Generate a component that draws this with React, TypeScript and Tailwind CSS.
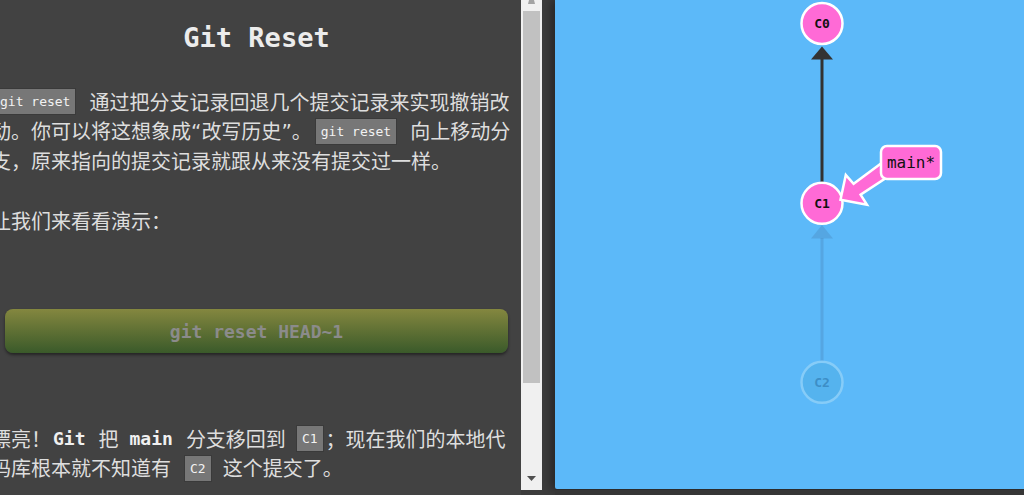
import React from 'react';

const CJK = "font-['Noto_Sans_CJK_SC','Noto_Sans',sans-serif]";
const MONO = "font-['DejaVu_Sans_Mono','Liberation_Mono',monospace]";

const Code: React.FC<{ children: React.ReactNode; className?: string }> = ({ children, className = '' }) => (
  <span
    className={`inline-block h-[27px] shrink-0 border border-[#3a3a3a] bg-[#777777] px-[5px] text-[13px] leading-[25px] text-[#f2f2f2] font-['DejaVu_Sans_Mono','Liberation_Mono',monospace] ${className}`}
  >
    {children}
  </span>
);

const Line: React.FC<{ children: React.ReactNode }> = ({ children }) => (
  <div className="flex h-[29.5px] items-center whitespace-nowrap">{children}</div>
);

const Bold: React.FC<{ children: React.ReactNode; className?: string }> = ({ children, className = '' }) => (
  <b
    className={`text-[18px] font-bold text-[#f0f0f0] font-['DejaVu_Sans_Mono','Liberation_Mono',monospace] ${className}`}
  >
    {children}
  </b>
);

const Lesson: React.FC = () => (
  <div className="w-[521px] shrink-0 overflow-hidden bg-[#424242]">
    <div className="flex w-[513px] flex-col pt-[20px]">
      <h1
        className={`text-center text-[27px] font-bold leading-[36px] text-[#ececec] ${MONO}`}
      >
        Git Reset
      </h1>
      <div className={`-ml-[9px] mt-[31px] text-[20px] text-[#dedede] ${CJK}`}>
        <Line>
          <Code className="ml-[3px] mr-[13px]">git reset</Code>
          通过把分支记录回退几个提交记录来实现撤销改
        </Line>
        <Line>
          动。你可以将这想象成<span className="font-['DejaVu_Sans',sans-serif]">“</span>改写历史
          <span className="font-['DejaVu_Sans',sans-serif]">”</span>。
          <Code className="ml-[3px] mr-[13px]">git reset</Code>
          向上移动分
        </Line>
        <Line>支，原来指向的提交记录就跟从来没有提交过一样。</Line>
      </div>
      <div className={`-ml-[9px] mt-[30.5px] text-[20px] text-[#dedede] ${CJK}`}>
        <Line>让我们来看看演示：</Line>
      </div>
      <div className="mx-[5px] mt-[73.5px] flex h-[44px] items-center justify-center rounded-lg bg-gradient-to-b from-[#84873f] to-[#3a5a2a] shadow-[0_2px_3px_rgba(0,0,0,0.45)]">
        <span className={`text-[18px] font-bold text-[#8b8b8b] ${MONO}`}>git reset HEAD~1</span>
      </div>
      <div className={`-ml-[9px] mt-[71px] text-[20px] text-[#dedede] ${CJK}`}>
        <Line>
          漂亮！
          <Bold className="ml-[2px] mr-[13px]">Git</Bold>
          把
          <Bold className="ml-[11px] mr-[13px]">main</Bold>
          分支移回到
          <Code className="ml-[10px] mr-[2px]">C1</Code>
          ；现在我们的本地代
        </Line>
        <Line>
          码库根本就不知道有
          <Code className="ml-[13px] mr-[11px]">C2</Code>
          这个提交了。
        </Line>
      </div>
    </div>
  </div>
);

const Scrollbar: React.FC = () => (
  <div className="flex h-[490px] w-[21px] shrink-0 flex-col items-center bg-[#f0f0f0]">
    <svg width="9" height="4" viewBox="0 0 9 4" className="shrink-0">
      <polygon points="1,4 8,4 7,0 2,0" fill="#a3a3a3" />
    </svg>
    <div className="mt-[7px] h-[372px] w-[17px] shrink-0 bg-[#c1c1c1]" />
    <div className="flex-1" />
    <svg width="9" height="6" viewBox="0 0 9 6" className="mb-[8px] shrink-0">
      <polygon points="0,0 9,0 4.5,5" fill="#505050" />
    </svg>
  </div>
);

const Graph: React.FC = () => (
  <svg width="469" height="489" viewBox="0 0 469 489" className="block">
    {/* faded C2 -> C1 */}
    <line x1="267" y1="362" x2="267" y2="238" stroke="rgba(40,60,90,0.14)" strokeWidth="3" />
    <polygon points="267,225 256,238.5 278,238.5" fill="rgba(40,60,90,0.14)" />
    <circle cx="267" cy="382.3" r="20.5" fill="#55b3ee" stroke="#86ccf8" strokeWidth="2.5" />
    <text x="267" y="387" textAnchor="middle" fontSize="13" fontWeight="bold" fill="#3d8ec6" className={MONO}>
      C2
    </text>

    {/* C1 -> C0 */}
    <line x1="267" y1="182" x2="267" y2="58" stroke="#333333" strokeWidth="3" />
    <polygon points="267,46.5 256,59.5 278,59.5" fill="#333333" />

    <circle cx="267" cy="23.5" r="20.5" fill="#ff6ad6" stroke="#ffffff" strokeWidth="2.5" />
    <text x="267" y="28.2" textAnchor="middle" fontSize="13" fontWeight="bold" fill="#111111" className={MONO}>
      C0
    </text>
    <circle cx="267" cy="203.3" r="20.5" fill="#ff6ad6" stroke="#ffffff" strokeWidth="2.5" />
    <text x="267" y="208" textAnchor="middle" fontSize="13" fontWeight="bold" fill="#111111" className={MONO}>
      C1
    </text>

    {/* branch arrow */}
    <polygon
      points="285.5,199.8 290.8,175 298.6,183.8 328,162 334,176 305.6,194.6 312,204.8"
      fill="#ff6ad6"
      stroke="#ffffff"
      strokeWidth="2.5"
    />
    <rect x="326" y="146" width="60" height="33" rx="6" fill="#ff6ad6" stroke="#ffffff" strokeWidth="2.5" />
    <text x="356" y="168" textAnchor="middle" fontSize="16" fill="#111111" className={MONO}>
      main*
    </text>
  </svg>
);

export default function App() {
  return (
    <div className="flex h-[495px] w-[1024px] overflow-hidden bg-[#3c3c3c]">
      <Lesson />
      <Scrollbar />
      <div className="w-[13px] shrink-0" />
      <div className="flex flex-1 flex-col">
        <div className="h-[489px] rounded-bl-[2px] bg-[#5cb9f9] shadow-[-4px_0_8px_rgba(0,0,0,0.35)]">
          <Graph />
        </div>
        <div className="flex-1 border-t border-[#2c2c2c] bg-[#363636]" />
      </div>
    </div>
  );
}
